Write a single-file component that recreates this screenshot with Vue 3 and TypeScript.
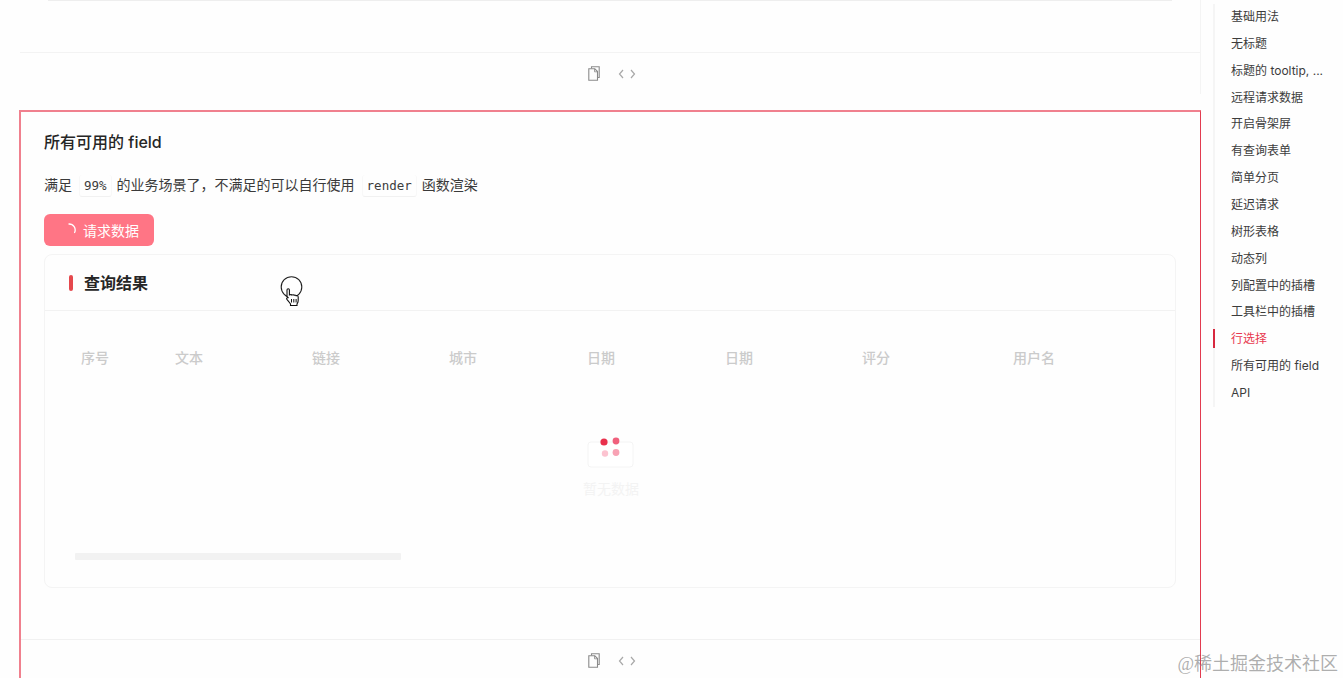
<script setup lang="ts">
const columns = ['序号', '文本', '链接', '城市', '日期', '日期', '评分', '用户名']

const anchors = [
  '基础用法',
  '无标题',
  '标题的 tooltip, ...',
  '远程请求数据',
  '开启骨架屏',
  '有查询表单',
  '简单分页',
  '延迟请求',
  '树形表格',
  '动态列',
  '列配置中的插槽',
  '工具栏中的插槽',
  '行选择',
  '所有可用的 field',
  'API',
]
const activeAnchor = '行选择'
</script>

<template>
  <div class="page">
    <main class="content">
      <section class="demo-prev">
        <div class="prev-card-end" />
        <div class="demo-actions prev-actions">
          <svg class="icon-copy" width="12" height="15" viewBox="0 0 12 15" fill="none" stroke="#8a8a8a" stroke-width="1.1">
            <path d="M3.500 2.500V.8h7.700v10.700H9.500" />
            <path d="M.8 2.800h6l2.700 2.700v8.700H.8z" />
            <path d="M6.500 2.800v3h3" stroke-width="0.8" />
          </svg>
          <svg class="icon-code" width="18" height="10" viewBox="0 0 18 10" fill="none" stroke="#a8a8a8" stroke-width="1.2">
            <path d="M5 1 1.500 5 5 9" />
            <path d="M13 1l3.500 4L13 9" />
          </svg>
        </div>
      </section>

      <section class="demo">
        <h3 class="demo-title">所有可用的 field</h3>
        <p class="demo-desc">
          满足<code>99%</code>的业务场景了，不满足的可以自行使用<code>render</code>函数渲染
        </p>
        <button class="btn-loading" type="button">
          <svg class="spinner" width="12" height="12" viewBox="0 0 12 12" fill="none">
            <path d="M5 1a6 6 0 0 1 5.600 8.500" stroke="#fff" stroke-width="1.300" stroke-linecap="round" />
          </svg>
          请求数据
        </button>

        <div class="result-card">
          <header class="result-head">
            <span class="result-mark" />
            <span class="result-title">查询结果</span>
          </header>
          <div class="result-body">
            <div class="table-head">
              <span v-for="(col, i) in columns" :key="i">{{ col }}</span>
            </div>
            <div class="table-empty">
              <svg width="48" height="32" viewBox="0 0 48 32" fill="none">
                <rect x="1" y="6" width="45" height="25" rx="3" fill="#fff" stroke="#f4f4f4" />
                <circle cx="17" cy="6" r="3.600" fill="#e9304c" />
                <circle cx="29" cy="5" r="3.400" fill="#f0607c" />
                <circle cx="18" cy="17.500" r="3.200" fill="#fcc3d0" />
                <circle cx="29" cy="16.500" r="3.400" fill="#f8a2b4" />
              </svg>
              <span class="empty-text">暂无数据</span>
            </div>
            <div class="table-scrollbar" />
          </div>
        </div>

        <div class="demo-actions">
          <svg class="icon-copy" width="12" height="15" viewBox="0 0 12 15" fill="none" stroke="#8a8a8a" stroke-width="1.1">
            <path d="M3.500 2.500V.8h7.700v10.700H9.500" />
            <path d="M.8 2.800h6l2.700 2.700v8.700H.8z" />
            <path d="M6.500 2.800v3h3" stroke-width="0.8" />
          </svg>
          <svg class="icon-code" width="18" height="10" viewBox="0 0 18 10" fill="none" stroke="#a8a8a8" stroke-width="1.2">
            <path d="M5 1 1.500 5 5 9" />
            <path d="M13 1l3.500 4L13 9" />
          </svg>
        </div>
      </section>
    </main>

    <aside class="anchors">
      <ul>
        <li v-for="item in anchors" :key="item" :class="{ active: item === activeAnchor }">{{ item }}</li>
      </ul>
    </aside>

    <!-- recorded pointer, sits over the page -->
    <svg class="pointer" width="24" height="32" viewBox="0 0 24 32">
      <circle cx="11.500" cy="11" r="10.300" fill="#fff" stroke="#222" stroke-width="1.1" />
      <path
        d="M7 14c0-1.600 2.400-1.600 2.400 0v5l.6-.2c1-.4 1.800 0 2 .3.800-.5 1.800-.3 2.100.2.900-.4 1.900 0 2.100.5 1-.4 2 .2 2 1.200v3.500c0 1.600-.6 2.600-1.200 3.500v1.500H10.500V28c-1-1.600-2.200-2.800-3.600-4.600-.8-1.200.4-2.400 1.600-1.400L7 20.500z"
        fill="#fff"
        stroke="#111"
        stroke-width="1.1"
      />
      <path d="M11.500 23v3.500M13.800 23v3.500M16.100 23v3.500" stroke="#111" stroke-width="1" />
    </svg>

    <span class="watermark">@稀土掘金技术社区</span>
  </div>
</template>

<style>
html,
body {
  margin: 0;
  height: 100%;
  overflow: hidden;
  background: #fff;
}
</style>

<style scoped>
.page {
  position: relative;
  display: flex;
  height: 678px;
  overflow: hidden;
  background: #fefefe;
  color: #2b2b2b;
  font-family: Inter, "Noto Sans CJK SC", sans-serif;
}
.content {
  width: 1201px;
  flex: none;
  padding-left: 19px;
  box-sizing: border-box;
}
.demo-prev {
  height: 94px;
  margin: 0 0 16px 1px;
  border-right: 1px solid #f4f4f4;
}
.prev-card-end {
  height: 52px;
  margin: 0 28px;
  box-sizing: border-box;
  border-top: 1px solid #eee;
}
.prev-actions {
  border-top: 1px solid #f3f3f3;
}
.demo {
  box-sizing: border-box;
  height: 700px;
  padding: 19px 24px 0 23px;
  border: 1px solid #f0808e;
  border-top-width: 2px;
  border-left-width: 2px;
  border-right-color: #e23c50;
}
.demo-title {
  margin: 0;
  font-size: 16px;
  line-height: 22px;
  font-weight: 500;
  color: #262626;
}
.demo-desc {
  margin: 21px 0 0;
  font-size: 14px;
  line-height: 22px;
  color: #3a3a3a;
}
.demo-desc code {
  display: inline-block;
  margin: 0 5px 0 7px;
  padding: 0 4px;
  line-height: 21px;
  font-family: "DejaVu Sans Mono", monospace;
  font-size: 12.5px;
  color: #3d3d3d;
  border-bottom: 1px solid #f1f1f1;
  border-left: 1px solid #f8f8f8;
  border-right: 1px solid #f8f8f8;
  border-radius: 3px;
}
.btn-loading {
  display: flex;
  align-items: center;
  width: 110px;
  height: 32px;
  margin-top: 17px;
  padding: 0 0 0 20px;
  border: none;
  border-radius: 6px;
  background: #ff7585;
  color: #fff;
  font-family: inherit;
  font-size: 14px;
}
.spinner {
  margin-right: 7px;
  margin-top: -2px;
}
.result-card {
  box-sizing: border-box;
  width: 1132px;
  height: 334px;
  margin-top: 8px;
  border: 1px solid #f4f4f4;
  border-radius: 8px;
}
.result-head {
  display: flex;
  align-items: center;
  height: 55px;
  padding-left: 24px;
  border-bottom: 1px solid #f2f2f2;
}
.result-mark {
  width: 4px;
  height: 16px;
  margin-right: 11px;
  border-radius: 2px;
  background: #e5484d;
}
.result-title {
  margin-top: -1px;
  font-size: 16px;
  font-weight: 700;
  color: #262626;
}
.result-body {
  padding: 36px 28px 0 29px;
}
.table-head {
  display: grid;
  grid-template-columns: 94px 137px 137px 138px 138px 137px 151px 1fr;
  padding-left: 7px;
  font-size: 14px;
  line-height: 22px;
  font-weight: 500;
  color: #cbcbcb;
}
.table-empty {
  display: flex;
  flex-direction: column;
  align-items: center;
  margin-top: 67px;
  margin-left: 1px;
}
.empty-text {
  margin-top: 10px;
  font-size: 14px;
  line-height: 22px;
  color: #f3f3f3;
}
.table-scrollbar {
  width: 326px;
  height: 7px;
  margin: 53px 0 0 1px;
  border-radius: 1px;
  background: #f2f2f2;
}
.demo-actions {
  display: flex;
  align-items: center;
  justify-content: center;
  gap: 18px;
  height: 41px;
  padding-left: 3px;
}
.demo > .demo-actions {
  margin: 51px -24px 0 -23px;
  border-top: 1px solid #f1f1f1;
  padding-bottom: 1px;
}
.icon-code {
  margin-top: 1px;
}
.anchors {
  flex: none;
  padding: 4px 0 0 12px;
}
.anchors ul {
  margin: 0;
  padding: 0;
  list-style: none;
  border-left: 2px solid #f5f5f5;
}
.anchors li {
  position: relative;
  height: 26.86px;
  padding-left: 16px;
  font-size: 12px;
  line-height: 26.86px;
  color: #3c3c3c;
  white-space: nowrap;
}
.anchors li.active {
  color: #e8384f;
}
.anchors li.active::before {
  content: "";
  position: absolute;
  left: -2px;
  top: 3px;
  width: 2px;
  height: 19px;
  background: #d8283f;
}
.pointer {
  position: absolute;
  left: 280px;
  top: 276px;
}
.watermark {
  position: absolute;
  right: 5px;
  top: 652px;
  font-family: "Liberation Serif", "Noto Sans CJK SC", serif;
  font-size: 18px;
  line-height: 24px;
  color: rgba(120, 120, 120, 0.6);
}
</style>
